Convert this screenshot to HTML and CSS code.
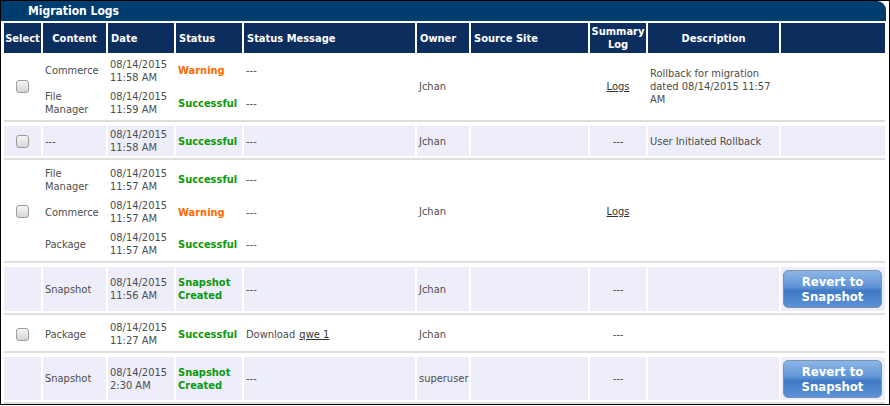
FILE: index.html
```html
<!DOCTYPE html>
<html>
<head>
<meta charset="utf-8">
<link rel="stylesheet" href="styles.css">
</head>
<body>
<div class="frame">
  <div class="titlebar">Migration Logs</div>
  <table class="logs">
    <colgroup>
      <col class="c-select"><col class="c-content"><col class="c-date"><col class="c-status"><col class="c-msg"><col class="c-owner"><col class="c-source"><col class="c-summary"><col class="c-desc"><col class="c-action">
    </colgroup>
    <thead>
      <tr>
        <th class="center">Select</th>
        <th class="center">Content</th>
        <th>Date</th>
        <th>Status</th>
        <th>Status Message</th>
        <th>Owner</th>
        <th>Source Site</th>
        <th class="center">Summary<br>Log</th>
        <th class="center">Description</th>
        <th></th>
      </tr>
    </thead>
    <tbody>
      <tr class="sub first">
        <td rowspan="2" class="center"><span class="check"></span></td>
        <td>Commerce</td>
        <td>08/14/2015<br>11:58 AM</td>
        <td class="warn">Warning</td>
        <td>---</td>
        <td rowspan="2">Jchan</td>
        <td rowspan="2"></td>
        <td rowspan="2" class="center"><a class="link">Logs</a></td>
        <td rowspan="2">Rollback for migration dated 08/14/2015 11:57 AM</td>
        <td rowspan="2"></td>
      </tr>
      <tr class="sub">
        <td>File<br>Manager</td>
        <td>08/14/2015<br>11:59 AM</td>
        <td class="ok">Successful</td>
        <td>---</td>
      </tr>
      <tr class="sep"><td colspan="10"></td></tr>

      <tr class="sub shaded">
        <td class="center"><span class="check"></span></td>
        <td>---</td>
        <td>08/14/2015<br>11:58 AM</td>
        <td class="ok">Successful</td>
        <td>---</td>
        <td>Jchan</td>
        <td></td>
        <td class="center">---</td>
        <td>User Initiated Rollback</td>
        <td></td>
      </tr>
      <tr class="sep"><td colspan="10"></td></tr>

      <tr class="sub first">
        <td rowspan="3" class="center"><span class="check"></span></td>
        <td>File<br>Manager</td>
        <td>08/14/2015<br>11:57 AM</td>
        <td class="ok">Successful</td>
        <td>---</td>
        <td rowspan="3">Jchan</td>
        <td rowspan="3"></td>
        <td rowspan="3" class="center"><a class="link">Logs</a></td>
        <td rowspan="3"></td>
        <td rowspan="3"></td>
      </tr>
      <tr class="sub">
        <td>Commerce</td>
        <td>08/14/2015<br>11:57 AM</td>
        <td class="warn">Warning</td>
        <td>---</td>
      </tr>
      <tr class="sub">
        <td>Package</td>
        <td>08/14/2015<br>11:57 AM</td>
        <td class="ok">Successful</td>
        <td>---</td>
      </tr>
      <tr class="sep"><td colspan="10"></td></tr>

      <tr class="tall shaded">
        <td></td>
        <td>Snapshot</td>
        <td>08/14/2015<br>11:56 AM</td>
        <td class="ok">Snapshot<br>Created</td>
        <td>---</td>
        <td>Jchan</td>
        <td></td>
        <td class="center">---</td>
        <td></td>
        <td class="btn-cell"><button class="revert">Revert to<br>Snapshot</button></td>
      </tr>
      <tr class="sep"><td colspan="10"></td></tr>

      <tr class="sub">
        <td class="center"><span class="check"></span></td>
        <td>Package</td>
        <td>08/14/2015<br>11:27 AM</td>
        <td class="ok">Successful</td>
        <td>Download <a class="link dl">qwe 1</a></td>
        <td>Jchan</td>
        <td></td>
        <td class="center">---</td>
        <td></td>
        <td></td>
      </tr>
      <tr class="sep"><td colspan="10"></td></tr>

      <tr class="tall last shaded">
        <td></td>
        <td>Snapshot</td>
        <td>08/14/2015<br>2:30 AM</td>
        <td class="ok">Snapshot<br>Created</td>
        <td>---</td>
        <td>superuser</td>
        <td></td>
        <td class="center">---</td>
        <td></td>
        <td class="btn-cell"><button class="revert">Revert to<br>Snapshot</button></td>
      </tr>
      <tr class="sep"><td colspan="10"></td></tr>
    </tbody>
  </table>
</div>
</body>
</html>
```

FILE: styles.css
```css
html, body {
  margin: 0;
  padding: 0;
  background: #fff;
}
body {
  width: 890px;
  height: 406px;
  overflow: hidden;
  font-family: "DejaVu Sans Condensed", "DejaVu Sans", "Liberation Sans", sans-serif;
  font-size: 11px;
  line-height: 13px;
  color: #4d4d4d;
}
.frame {
  width: 888px;
  height: 403px;
  border: 1px solid #000;
  overflow: hidden;
  background: #fff;
}
.titlebar {
  width: 858px;
  height: 20px;
  padding-left: 27px;
  background: #003d6f;
  border-top-right-radius: 9px;
  color: #fff;
  font-weight: bold;
  font-size: 12px;
  line-height: 20px;
}
.logs {
  margin-left: 1px;
  width: 885px;
  table-layout: fixed;
  border-collapse: separate;
  border-spacing: 2px;
}
.c-select { width: 37px; }
.c-content { width: 63px; }
.c-date { width: 66px; }
.c-status { width: 66px; }
.c-msg { width: 171px; }
.c-owner { width: 52px; }
.c-source { width: 117px; }
.c-summary { width: 56px; }
.c-desc { width: 131px; }
.c-action { width: 104px; }

.logs th, .logs td {
  box-sizing: border-box;
  padding: 0 2px;
  vertical-align: middle;
  text-align: left;
}
.logs th {
  height: 30px;
  background: #0b2e5f;
  color: #fff;
  font-weight: bold;
  font-size: 11px;
  line-height: 13px;
  padding-left: 3px;
}
.logs th.center, .logs td.center {
  text-align: center;
  padding-left: 0;
  padding-right: 0;
}
.sub td {
  height: 30px;
}
.sub.first td {
  height: 31px;
}
.tall td {
  height: 44px;
}
.tall.last td {
  height: 43px;
}
.shaded td {
  background: #eeeefb;
}
.sep td {
  height: 4px;
  padding: 0;
  border-top: 2px solid #dedede;
  background: #fff;
}
.warn {
  color: #ff6a00;
  font-weight: bold;
}
.ok {
  color: #0a9a0a;
  font-weight: bold;
}
.link {
  color: #333;
  text-decoration: underline;
}
.dl {
  margin-left: 1px;
}
.check {
  display: inline-block;
  width: 11px;
  height: 11px;
  border: 1px solid #9c9c9c;
  border-radius: 3px;
  background: linear-gradient(#f6f6f6, #d6d6d6);
  vertical-align: middle;
}
.btn-cell {
  text-align: center;
}
.revert {
  width: 99px;
  height: 38px;
  margin: 0;
  padding: 0;
  border: 1px solid #7a93b5;
  border-radius: 5px;
  background: linear-gradient(#8db6e6 0%, #5f93d6 45%, #3f78c4 55%, #5d92d8 100%);
  color: #fff;
  font-family: inherit;
  font-weight: bold;
  font-size: 13px;
  line-height: 15px;
}
```
